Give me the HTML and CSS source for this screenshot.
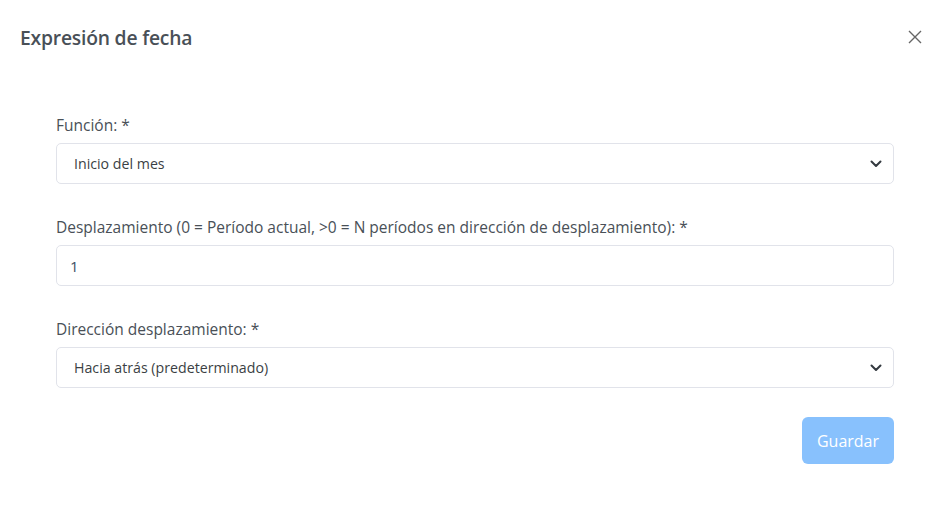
FILE: index.html
```html
<!DOCTYPE html>
<html lang="es">
<head>
<meta charset="utf-8">
<title>Expresión de fecha</title>
<link rel="stylesheet" href="styles.css">
</head>
<body>
<div class="modal">
  <div class="modal-header">
    <h2 class="modal-title">Expresión de fecha</h2>
    <button class="close" aria-label="Cerrar">
      <svg width="14" height="14" viewBox="0 0 14 14"><path d="M1 1L13 13M13 1L1 13" stroke="#666" stroke-width="1.4" fill="none"/></svg>
    </button>
  </div>
  <div class="modal-body">
    <div class="field">
      <label class="label">Función: *</label>
      <div class="control select">
        <span class="value">Inicio del mes</span>
        <svg class="chev" width="12" height="8" viewBox="0 0 12 8"><path d="M1.5 1.5L6 6L10.5 1.5" stroke="#343a40" stroke-width="2" fill="none" stroke-linecap="round" stroke-linejoin="round"/></svg>
      </div>
    </div>
    <div class="field">
      <label class="label">Desplazamiento (0 = Período actual, &gt;0 = N períodos en dirección de desplazamiento): *</label>
      <div class="control input">
        <span class="value num">1</span>
      </div>
    </div>
    <div class="field">
      <label class="label">Dirección desplazamiento: *</label>
      <div class="control select">
        <span class="value">Hacia atrás (predeterminado)</span>
        <svg class="chev" width="12" height="8" viewBox="0 0 12 8"><path d="M1.5 1.5L6 6L10.5 1.5" stroke="#343a40" stroke-width="2" fill="none" stroke-linecap="round" stroke-linejoin="round"/></svg>
      </div>
    </div>
    <div class="actions">
      <button class="btn-primary" disabled>Guardar</button>
    </div>
  </div>
</div>
</body>
</html>
```
FILE: styles.css
```css
html, body {
  margin: 0;
  padding: 0;
  background: #fff;
}
body {
  font-family: "Open Sans", "Noto Sans", sans-serif;
  color: #495057;
}
.modal {
  width: 946px;
  height: 520px;
  box-sizing: border-box;
}
.modal-header {
  display: flex;
  align-items: center;
  justify-content: space-between;
  padding: 23px 24px 0 20px;
  height: 28px;
}
.modal-title {
  margin: 0;
  font-size: 19.3px;
  font-weight: 600;
  color: #495057;
  letter-spacing: -0.2px;
}
.close {
  border: none;
  background: none;
  padding: 0;
  width: 14px;
  height: 14px;
  display: flex;
}
.modal-body {
  padding: 64px 52px 0 56px;
  display: flex;
  flex-direction: column;
}
.field {
  display: flex;
  flex-direction: column;
}
.field + .field {
  margin-top: 33px;
}
.label {
  font-size: 15.5px;
  color: #495057;
  line-height: 20px;
  margin-bottom: 8px;
}
.control {
  height: 41px;
  box-sizing: border-box;
  border: 1px solid #e1e3ea;
  border-radius: 5px;
  display: flex;
  align-items: center;
  justify-content: space-between;
  padding: 0 11px 0 17px;
}
.value {
  font-size: 14.2px;
  color: #3b3f44;
}
.num {
  color: #3d4f63;
  font-size: 15px;
}
.input {
  padding-left: 13px;
}
.actions {
  display: flex;
  justify-content: flex-end;
  margin-top: 29px;
}
.btn-primary {
  font-family: inherit;
  width: 92px;
  height: 47px;
  border: none;
  border-radius: 6px;
  background: #88c1fd;
  color: #fff;
  font-size: 16px;
}
```
